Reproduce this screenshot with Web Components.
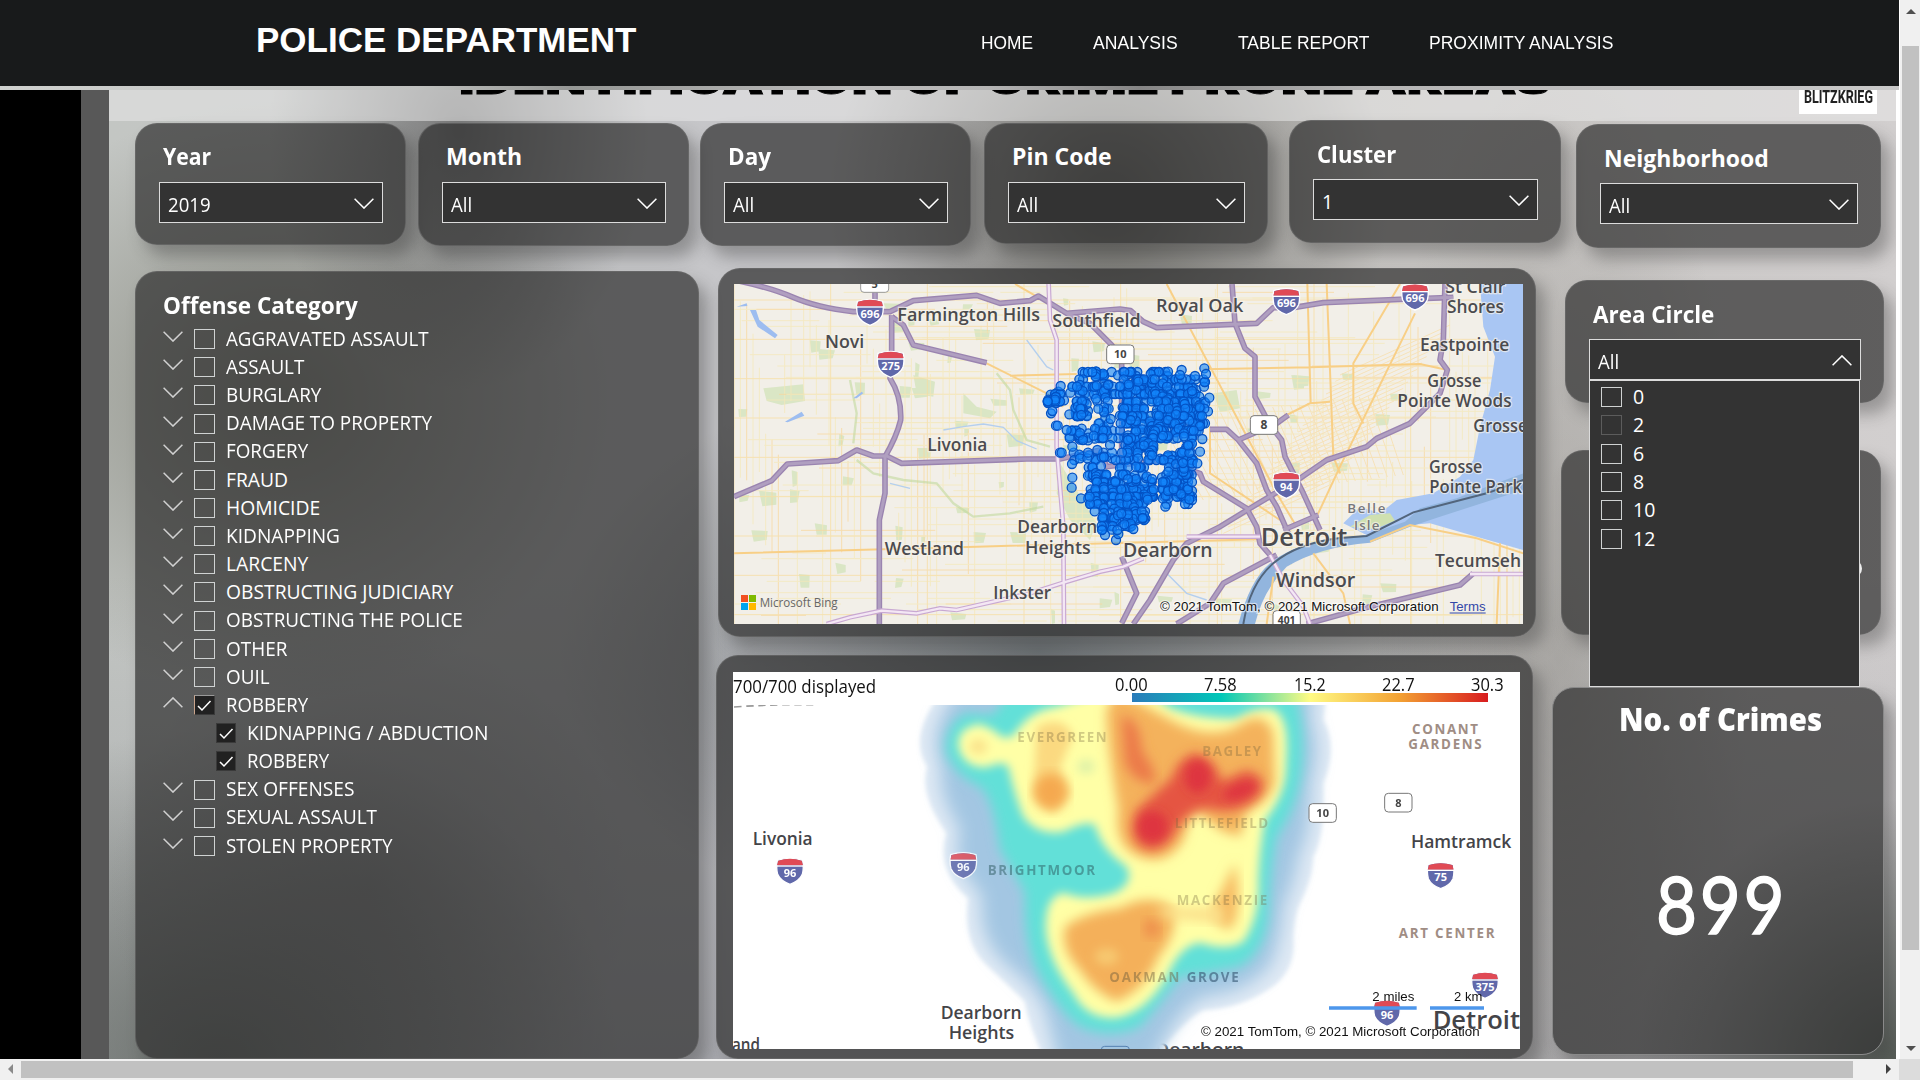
<!DOCTYPE html>
<html lang="en">
<head>
<meta charset="utf-8">
<title>Police Department</title>
<style>
html,body{margin:0;padding:0;width:1920px;height:1080px;overflow:hidden;background:#f0f0f0;font-family:"Open Sans","Noto Sans",sans-serif}
</style>
</head>
<body>
<app-window></app-window>
<script>
function define(name, html, setup) {
  customElements.define(name, class extends HTMLElement {
    connectedCallback() {
      if (this.shadowRoot) return;
      const t = document.createElement('template');
      t.innerHTML = typeof html === 'function' ? html(this) : html;
      this.attachShadow({ mode: 'open' }).appendChild(t.content.cloneNode(true));
      if (setup) setup(this, this.shadowRoot);
    }
  });
}

/* One line of text squeezed or stretched to a set width */
define('fit-text', `<style>
:host{display:inline-block;white-space:nowrap;flex:none}
span{display:inline-block;transform-origin:0 50%}
</style><span><slot></slot></span>`, (el, root) => {
  const w = +el.getAttribute('w');
  if (!w) return;
  const s = root.querySelector('span');
  const natural = s.offsetWidth;
  el.style.width = w + 'px';
  if (natural) s.style.transform = `scaleX(${w / natural})`;
});

define('chevron-icon', el => `<style>
:host{display:block;flex:none;width:20px;height:11px}
svg{display:block}
</style><svg width="20" height="11" viewBox="0 0 20 11" fill="none" stroke="${el.getAttribute('tone') || '#fff'}" stroke-width="1.5"><path d="${el.hasAttribute('up') ? 'M.6 10.2 10 .9l9.4 9.3' : 'M.6.8 10 10.1 19.4.8'}"/></svg>`);

define('check-box', el => `<style>
:host{display:block;flex:none;box-sizing:border-box;width:21px;height:20px;border:1.5px solid #cfd2d2}
:host([checked]){background:#212121;border:1px solid #3a3a3a;width:20px;height:20px}
:host([edge]){border-color:#999 #3a3a3a #3a3a3a #c9a48c;width:21px}
:host([dim]){border:1px solid #5c5c5c}
svg{display:block}
</style>${el.hasAttribute('checked') ? '<svg width="18" height="18" viewBox="0 0 18 18" fill="none" stroke="#fff" stroke-width="1.5"><path d="M3 10l4 4 8.5-9"/></svg>' : ''}`);

define('nav-bar', `<style>
:host{display:flex;height:86px;background:#181a1b;color:#fff;font-family:"Liberation Sans",sans-serif;align-items:center;box-sizing:border-box}
h1{margin:0 0 6px 256px;font-size:35px;line-height:40px;font-weight:700;width:381px}
nav{display:flex;gap:60px;margin-left:344px;font-size:18px;line-height:22px}
</style><h1><fit-text w="380">POLICE DEPARTMENT</fit-text></h1>
<nav><fit-text w="52">HOME</fit-text><fit-text w="85">ANALYSIS</fit-text><fit-text w="131">TABLE REPORT</fit-text><fit-text w="184">PROXIMITY ANALYSIS</fit-text></nav>`);

define('glass-card', `<style>
:host{display:block;box-sizing:border-box;flex:none;border-radius:22px;background:rgba(45,45,46,.7);border:1px solid rgba(115,115,115,.55);box-shadow:9px 11px 16px rgba(50,50,50,.36)}
</style><slot></slot>`);

define('select-box', el => `<style>
:host{display:block}
.b{box-sizing:border-box;display:flex;align-items:center;justify-content:space-between;height:41px;border:1.5px solid #dcdcdc;background:#333;color:#fff;padding:4px 8px 0 8px;font-size:19.5px;line-height:28px}
chevron-icon{margin-top:-2px}
</style><div class="b"><fit-text w="${el.getAttribute('w')}">${el.getAttribute('value')}</fit-text><chevron-icon ${el.hasAttribute('open') ? 'up' : ''}></chevron-icon></div>`);

define('filter-card', el => `<style>
:host{display:block;flex:none}
glass-card{height:100%;padding:17px 22px 0 23px}
h3{margin:var(--dy,0px) 0 calc(11px - var(--dy,0px)) 4px;height:30px;line-height:31px;font-size:23px;font-weight:700;color:#fff}
.s{position:relative}
</style><glass-card><h3><fit-text w="${el.getAttribute('lw')}">${el.getAttribute('label')}</fit-text></h3><div class="s"><select-box value="${el.getAttribute('value')}" w="${el.getAttribute('vw')}" ${el.hasAttribute('open') ? 'open' : ''}></select-box><slot></slot></div></glass-card>`);

define('option-list', `<style>
:host{position:absolute;z-index:5;left:0;top:40px;width:271px;height:308px;box-sizing:border-box;background:#333;border:1.5px solid #dcdcdc;border-top-width:2px;padding:2px 0 0 11px;color:#fff;font-size:19.5px;font-weight:500}
.o{display:flex;align-items:center;height:28.3px;gap:11px;line-height:28px}
</style>` + [['0', 11], ['2', 11], ['6', 11], ['8', 11], ['10', 22], ['12', 22]].map(o =>
  `<div class="o"><check-box ${o[0] === '2' ? 'dim' : ''}></check-box><fit-text w="${o[1]}">${o[0]}</fit-text></div>`).join(''));

define('tree-item', el => `<style>
:host{display:flex;align-items:center;height:28.17px;line-height:28px;color:#fff;font-size:19.3px}
chevron-icon,.sp{width:20px;margin:-5px 11px 0 0}
:host([child]) .sp{margin-right:33px}
check-box{margin-right:11px}
:host([child]) check-box{margin-right:11px}
fit-text{margin-top:-.5px}
</style>${el.hasAttribute('child') ? '<span class="sp"></span>' : `<chevron-icon tone="#d0d0d0" ${el.hasAttribute('checked') ? 'up' : ''}></chevron-icon>`}
<check-box ${el.hasAttribute('checked') ? 'checked' : ''} ${el.hasAttribute('checked') && !el.hasAttribute('child') ? 'edge' : ''}></check-box><fit-text w="${el.getAttribute('w')}"><slot></slot></fit-text>`);

const items = [['AGGRAVATED ASSAULT', 203], ['ASSAULT', 78], ['BURGLARY', 95], ['DAMAGE TO PROPERTY', 206], ['FORGERY', 82], ['FRAUD', 62], ['HOMICIDE', 94], ['KIDNAPPING', 114], ['LARCENY', 82], ['OBSTRUCTING JUDICIARY', 227], ['OBSTRUCTING THE POLICE', 237], ['OTHER', 61], ['OUIL', 44], ['ROBBERY', 82, 'checked'], ['KIDNAPPING / ABDUCTION', 241, 'checked child'], ['ROBBERY', 82, 'checked child'], ['SEX OFFENSES', 128], ['SEXUAL ASSAULT', 151], ['STOLEN PROPERTY', 167]];
define('offense-tree', `<style>
:host{display:block;flex:none;width:564px;height:788px;margin-top:3px}
glass-card{height:100%;padding:18px 0 0 27px}
h3{margin:0 0 5px;height:30px;line-height:31px;font-size:23px;color:#fff}
</style><glass-card><h3><fit-text w="195">Offense Category</fit-text></h3>` +
items.map(i => `<tree-item w="${i[1]}" ${i[2] || ''}>${i[0]}</tree-item>`).join('') + `</glass-card>`);

/* interstate shield centred on x,y in map units (3 per pixel) */
function shield(x, y, n, o) {
  return `<g transform="translate(${x} ${y})" opacity="${o || 1}"><path d="M-38-34Q0-46 38-34Q42-10 37 8Q28 28 0 38Q-28 28-37 8Q-42-10-38-34Z" fill="#6068aa" stroke="#fff" stroke-width="4"/><path d="M-35-33Q0-44 35-33L39-19H-39Z" fill="#e04a55"/><path d="M-40-17H40" stroke="#fff" stroke-width="4"/><text y="15" text-anchor="middle" font-size="33" font-weight="700" fill="#fff">${n}</text></g>`;
}
function route(x, y, n, fs) {
  return `<rect x="${x - 41}" y="${y - 28}" width="82" height="56" rx="11" fill="#fff" stroke="#777" stroke-width="3"/><text x="${x}" y="${y + 12}" text-anchor="middle" font-size="${fs || 33}" font-weight="700" fill="#444">${n}</text>`;
}
function lab(x, y, w, s, fs, extra) {
  return `<text x="${x}" y="${y}" textLength="${w}" lengthAdjust="spacingAndGlyphs" font-size="${fs}" ${extra || ''}>${s}</text>`;
}
/* district names keep their glyph widths and are letter-spaced */
function area(x, y, w, s) {
  return `<text x="${x}" y="${y}" textLength="${w}" lengthAdjust="spacing" font-size="40">${s}</text>`;
}
function rng(seed) { return () => ((seed = (seed * 1664525 + 1013904223) >>> 0) / 4294967296); }

function minorRoads() {
  const r = rng(11); let s = '';
  for (let x = 72; x < 2440; x += 19) {
    const y0 = 72 + r() * 700, len = 100 + r() * 600;
    s += `<path d="M${x} ${y0 | 0}v${len | 0}" stroke="${r() < .2 ? '#f8d79c' : '#f5e8b8'}"/>`;
  }
  for (let y = 80; y < 1092; y += 17) {
    for (let k = 0; k < 3; k++) {
      const x0 = 72 + r() * 1900, len = 100 + r() * 600;
      s += `<path d="M${x0 | 0} ${y}h${len | 0}" stroke="${r() < .2 ? '#f8d79c' : '#f5e8b8'}"/>`;
    }
  }
  for (let i = 0; i < 9; i++) {
    s += `<path d="M${72 + i * 290} 72V1092M72 ${120 + i * 118}H2440" stroke="#f7dd9f"/>`;
  }
  for (let i = 0; i < 26; i++) {
    s += `<path d="M${1480 + i * 24} ${720 - i * 3}l${-130 + i * 2} -240M${1540 + i * 14} ${820 - i * 19}l330 -150" stroke="#f8deaa"/>`;
  }
  return s;
}
function parks() {
  const r = rng(5); let s = '';
  for (let i = 0; i < 75; i++) {
    const x = 80 + r() * 2000, y = 80 + r() * 980, w = 12 + r() * 42, h = 10 + r() * 32;
    s += `<path d="M${x | 0} ${y | 0}l${w | 0} ${(r() * 8) | 0} ${-r() * 8 | 0} ${h | 0} ${-w * .8 | 0} ${(r() * 6) | 0}z"/>`;
  }
  return s;
}
function dots() {
  const r = rng(77), out = [];
  const regions = [[18, 125, 72, 160, 24], [105, 63, 390, 80, 42], [90, 95, 230, 135, 36], [106, 140, 142, 208, 28], [168, 140, 208, 255, 28], [235, 90, 322, 178, 60], [235, 178, 340, 300, 88], [330, 88, 500, 150, 78], [345, 150, 500, 240, 135], [330, 235, 462, 268, 42], [260, 268, 350, 302, 22], [88, 235, 190, 272, 24], [100, 314, 420, 326, 46], [145, 335, 160, 385, 8], [155, 368, 200, 395, 14], [150, 396, 345, 442, 88], [145, 442, 330, 478, 70], [180, 488, 320, 514, 42], [182, 520, 285, 546, 14], [365, 372, 462, 452, 74], [370, 335, 455, 370, 20], [425, 258, 462, 340, 25], [225, 350, 340, 395, 28]];
  for (const g of regions) for (let i = 0; i < g[4]; i++) {
    let x = g[0] + r() * (g[2] - g[0]), y = g[1] + r() * (g[3] - g[1]);
    if (r() < .5) y = Math.round(y / 22) * 22; else if (r() < .4) x = Math.round(x / 24) * 24;
    out.push([x, y]);
  }
  const single = [425, 60, 420, 75, 493, 55, 498, 72, 465, 78, 508, 143, 487, 267, 480, 305, 472, 340, 33, 190, 37, 183, 88, 193, 48, 227, 53, 227, 80, 240, 97, 290, 60, 308, 65, 308, 172, 300, 183, 348, 96, 342, 97, 383, 95, 413, 123, 445, 376, 470, 435, 462, 448, 448, 228, 570, 195, 555, 235, 552, 232, 540, 280, 537, 308, 504, 186, 540, 62, 108, 212, 207, 217, 265, 210, 285];
  for (let i = 0; i < single.length; i += 2) out.push([single[i], single[i + 1]]);
  return out.map(p => `<circle cx="${p[0].toFixed(0)}" cy="${p[1].toFixed(0)}" r="13.5"/>`).join('');
}

const hw = ['M72 60Q180 82 250 112T430 155H540L610 122L800 106L870 130L960 122L985 108L1070 160L1230 147L1262 152L1300 185L1340 203L1640 190L1690 143L1750 143L1840 128L2070 118L2230 112',
  'M495 90V150M545 165V330L540 355Q575 410 572 480Q560 530 525 590V700L508 780V1092', 'M545 170L580 195L610 255L830 308',
  'M72 710L185 662L232 612L385 602L440 570L490 588H530L575 610L950 597H1050L1170 570L1190 620L1350 600L1470 640L1480 665L1610 745L1640 800L1650 850L1680 885',
  'M1070 160L1140 190L1205 255L1235 300V620', 'M1566 72L1575 190L1605 265L1635 290V410L1680 495L1715 540L1725 590L1780 700L1830 810',
  'M1500 508H1550L1585 540L1700 490L1735 465M1585 540L1640 610L1670 690L1700 740L1735 820',
  'M2205 72L2200 240L2190 300L2212 330L2190 400L2150 440L2100 490L2000 535L1970 560L1850 600L1770 655L1620 745L1530 800L1430 850L1390 900L1320 1020L1270 1092',
  'M1235 890L1280 1000L1235 1090M1720 810L1825 765M1700 885L1540 970L1500 1030L1400 1092M1790 1092L1960 1045L2250 975L2290 940'];
const hwPink = 'M1016 72L1020 180L1040 240V560L1060 800L1062 1092M350 1092L420 1072L515 1052L620 1060L690 1045L740 1050L960 1000L1060 968L1170 935L1240 920L1300 895M1430 830H1650M1680 885L1720 960L1780 1040L1800 1092M2280 942H2440';

define('crime-map', `<style>
:host{display:block;flex:none;margin-left:1px;width:818px;height:369px}
glass-card{height:100%;padding:15px}
svg{display:block;font-family:"Open Sans",sans-serif}
</style><glass-card><svg width="789" height="340" viewBox="72 72 2367 1020">
<rect x="72" y="72" width="2367" height="1020" fill="#f2efe8"/>
<g fill="#d3e3ba" opacity=".75">${parks()}<path d="M160 385l120-12 5 50-70 12-45-12zM610 345l65 20-5 45-50-8zM1510 400l70-10 10 55-60 12zM1050 610l50 80 60 100-20 50-60-60-40-80zM760 400l40 40 60 15-20 20-80-15z"/></g>
<g fill="none" stroke-width="3" opacity=".75">${minorRoads()}</g>
<g fill="none" stroke="#c2d99c" stroke-width="7" opacity=".6"><path d="M440 600l50 40 90 20 100 10 50 60 60 40 110-10 100-20M860 340l40 50 10 60 40 90 70 20M420 360l20 100-10 90"/></g>
<g fill="none" stroke="#b4cfee" stroke-width="4"><path d="M700 510l60-10 60 -8 60 10 40 40 60 25M540 670l60 15M950 240l60 80 20 10M1370 940l60 60 60 20"/></g>
<path d="M120 150l18 0 10 30 55 45-8 10-52-35zM80 140l30-10 2 8zM225 485l50-30 8 12-50 20zM400 380l15-8M430 415l25-20 5 5-20 15z" fill="#9dbdf0"/>
<path d="M2310 72L2320 200L2355 290L2340 390L2310 500L2290 600L2250 650L2170 700L2060 720L2010 760L1950 740L1900 790L1980 830L2100 795L2160 790L2300 830L2440 870V72Z" fill="#a9c6f3"/>
<path d="M2440 640L2330 680L2240 715L2130 745L2085 785L1970 825L1850 840Q1740 860 1680 910T1585 1092H1635Q1660 990 1730 920Q1830 860 1980 848L2100 800L2190 770L2440 690Z" fill="#92b5de"/>
<path d="M1920 800l60-35 60-5 15 22-60 25z" fill="#cfe0b0"/>
<g fill="none" stroke="#f8cf86" stroke-width="6"><path d="M915 72L990 115M830 310L1010 400L1060 440M900 347L1100 342M1370 72L1700 700L1760 800M1480 328L1800 322L2130 312L2212 330M1792 72L1802 430M1850 72L1870 590L1890 640M2070 72L1930 310V430L1960 490M2115 160L1890 620L1820 770M1500 500V640L1710 780M1730 465L1800 430L1860 425M72 880L800 860L1650 838M1980 845L2100 795L2300 835L2440 880M2370 850L2360 1092M1810 880L1900 1000L1920 1092M1690 950L1670 1092"/></g>
<g fill="none" stroke="#9a84b0" stroke-width="17" stroke-linejoin="round">${hw.map(d => `<path d="${d}"/>`).join('')}</g>
<g fill="none" stroke="#b09fc0" stroke-width="9" stroke-linejoin="round">${hw.map(d => `<path d="${d}"/>`).join('')}</g>
<path d="${hwPink}" fill="none" stroke="#c8a8d2" stroke-width="14"/><path d="${hwPink}" fill="none" stroke="#f4e7f4" stroke-width="7"/>
<path d="M2440 660L2330 700L2110 757L1970 828L1890 834Q1760 850 1690 910T1600 1092" fill="none" stroke="#52657c" stroke-width="6"/>
${shield(480, 158, 696)}${shield(542, 314, 275)}${shield(1729, 126, 696)}${shield(2115, 112, 696)}${shield(1729, 677, 94)}
<rect x="452" y="42" width="84" height="55" rx="10" fill="#fff" stroke="#999" stroke-width="3"/><text x="494" y="83" text-anchor="middle" font-size="33" font-weight="700" fill="#444">5</text>
${route(1231, 283, 10)}${route(1662, 495, 8, 36)}${route(1730, 1080, 401, 31)}
<g fill="#4b4b4f" stroke="#f7f4ec" stroke-width="7" stroke-opacity=".7" paint-order="stroke" font-weight="600">
${lab(345, 264, 118, 'Novi', 53)}${lab(562, 184, 428, 'Farmington Hills', 53)}${lab(1027, 202, 265, 'Southfield', 53)}${lab(1338, 156, 262, 'Royal Oak', 53)}
${lab(652, 573, 180, 'Livonia', 53)}${lab(524, 884, 238, 'Westland', 53)}${lab(922, 819, 240, 'Dearborn', 53)}${lab(945, 881, 197, 'Heights', 53)}${lab(850, 1018, 173, 'Inkster', 53)}
${lab(2206, 98, 180, 'St Clair', 53)}${lab(2211, 160, 171, 'Shores', 53)}${lab(2130, 273, 268, 'Eastpointe', 53)}${lab(2152, 380, 162, 'Grosse', 53)}${lab(2062, 441, 343, 'Pointe Woods', 53)}${lab(2290, 517, 162, 'Grosse', 53)}${lab(2157, 638, 160, 'Grosse', 53)}${lab(2158, 699, 278, 'Pointe Park', 53)}
${lab(1239, 892, 269, 'Dearborn', 57)}${lab(1652, 857, 260, 'Detroit', 74)}${lab(1698, 981, 238, 'Windsor', 60)}${lab(2175, 920, 258, 'Tecumseh', 53)}
<g fill="#77777b"><text x="1912" y="760" textLength="114" font-size="40">Belle</text><text x="1932" y="809" textLength="76" font-size="40">Isle</text></g></g>
<g transform="translate(990 270)" fill="#1286fb" fill-opacity=".6" stroke="#0452c4" stroke-width="3.8">${dots()}</g>
<path d="M93 1005h21v21H93z" fill="#f25022"/><path d="M117 1005h21v21h-21z" fill="#7fba00"/><path d="M93 1029h21v21H93z" fill="#00a4ef"/><path d="M117 1029h21v21h-21z" fill="#ffb900"/>
${lab(149, 1040, 234, 'Microsoft Bing', 37, 'fill="#666"')}
<g font-family="Liberation Sans,sans-serif">${lab(1350, 1053, 836, '© 2021 TomTom, © 2021 Microsoft Corporation', 40, 'fill="#111" stroke="#fff" stroke-opacity=".6" stroke-width="7" paint-order="stroke"')}${lab(2219, 1053, 108, 'Terms', 40, 'fill="#3347a8"')}</g><path d="M2219 1059h108" stroke="#3347a8" stroke-width="3"/>
</svg></glass-card>`);

define('heat-map', `<style>
:host{display:block;flex:none;margin:18px 0 0 -1px;width:817px;height:404px}
glass-card{height:100%;padding:16px 12px 9px 16px}
.bar{display:flex;height:33px;width:787px;background:#fff;color:#111;font-size:18.5px;justify-content:space-between}
.n{margin:1px 0 0 0;line-height:26px}
.scale{width:374px;margin-right:16px}
.t{display:flex;justify-content:space-between;line-height:25px;height:21px;font-size:17.5px;margin-left:-15px}
.g{height:9px;width:356px;margin-left:2px;background:linear-gradient(90deg,#2b7bba,#00c8b8 25%,#fffb84 50%,#f3a233 75%,#d81c1f)}
svg{display:block;font-family:"Open Sans",sans-serif}
</style><glass-card><div class="bar"><fit-text class="n" w="143">700/700 displayed</fit-text><div class="scale"><div class="t"><fit-text w="33">0.00</fit-text><fit-text w="33">7.58</fit-text><fit-text w="32">15.2</fit-text><fit-text w="33">22.7</fit-text><fit-text w="33">30.3</fit-text></div><div class="g"></div></div></div>
<svg width="787" height="344" viewBox="69 165 2361 1032">
<defs><filter id="b1" x="-20%" y="-20%" width="140%" height="140%"><feGaussianBlur stdDeviation="17"/></filter>
<filter id="b2" x="-20%" y="-20%" width="140%" height="140%"><feGaussianBlur stdDeviation="26"/></filter>
<filter id="b3" x="-50%" y="-50%" width="200%" height="200%"><feGaussianBlur stdDeviation="14"/></filter>
<filter id="b4" x="-10%" y="-10%" width="120%" height="120%"><feGaussianBlur stdDeviation="7"/></filter></defs>
<rect x="69" y="165" width="2361" height="1032" fill="#fff"/>
<path d="M72 171Q200 162 310 164" fill="none" stroke="#999" stroke-width="5" stroke-dasharray="22 14"/>
<g fill="#444448" font-weight="600">${lab(128, 586, 180, 'Livonia', 53)}${lab(692, 1106, 243, 'Dearborn', 53)}${lab(716, 1168, 197, 'Heights', 53)}${lab(66, 1204, 84, 'and', 53)}${lab(1335, 1218, 268, 'Dearborn', 53)}${lab(2103, 595, 301, 'Hamtramck', 53)}${lab(2168, 1136, 262, 'Detroit', 74)}</g>
<g fill="#a08d84" font-weight="700">${area(2106, 252, 198, 'CONANT')}${area(2095, 297, 220, 'GARDENS')}${area(2066, 863, 288, 'ART CENTER')}</g>
<g>
<path d="M700 120Q590 260 652 350Q625 430 710 550Q675 660 775 745Q755 880 835 950Q905 1015 945 1055Q955 1130 1010 1240H1320Q1425 1105 1480 1080Q1600 1075 1695 1005Q1760 950 1750 860Q1755 790 1770 760Q1810 680 1810 620Q1845 560 1840 400Q1885 290 1840 210L1850 120Z" fill="#dfe9f4" filter="url(#b4)"/>
<path d="M760 100Q640 240 695 350Q680 430 750 540Q715 640 815 735Q800 870 895 950Q975 1010 1005 1080L1050 1260H1320Q1395 1080 1485 1040Q1615 1030 1685 940Q1718 850 1720 770Q1760 680 1767 610Q1802 560 1802 400Q1837 290 1802 210L1812 100Z" fill="#a3c6e2" filter="url(#b2)"/>
<path d="M900 120L850 195L765 190Q700 230 708 310Q740 380 810 410Q850 440 870 600Q920 680 945 730Q940 880 985 970Q1050 1090 1110 1130Q1200 1170 1290 1130Q1350 1060 1410 980Q1500 970 1590 950Q1660 910 1675 800Q1680 660 1700 560Q1770 460 1778 330Q1785 220 1755 120Z" fill="#62e0d8" filter="url(#b1)"/>
<path d="M810 222Q740 232 745 290Q762 355 830 352Q880 330 895 350Q915 440 940 500Q985 558 1060 545Q1130 510 1155 525Q1175 600 1250 650Q1275 700 1210 730Q1130 755 1060 728Q1000 740 1008 850Q1020 940 1090 1030Q1130 1110 1220 1103Q1310 1085 1370 980Q1410 885 1470 878Q1550 905 1600 875Q1650 800 1645 690Q1650 580 1665 510Q1730 430 1728 340Q1740 200 1690 178Q1640 170 1580 205Q1480 210 1380 175L1320 130H1160L1040 170Q960 180 915 250Q890 280 850 240Z" fill="#ffffa6" filter="url(#b3)"/>
<ellipse cx="805" cy="290" rx="28" ry="24" fill="#fbe48d" filter="url(#b3)"/>
<path d="M980 230Q1060 190 1090 260Q1060 320 1050 360L1080 430L1030 490L970 440Z" fill="#fbd980" filter="url(#b3)"/>
<ellipse cx="1022" cy="425" rx="50" ry="55" fill="#f5a94f" filter="url(#b1)"/>
<ellipse cx="1128" cy="350" rx="26" ry="22" fill="#dff2a8" filter="url(#b3)"/>
<path d="M1220 120L1300 165L1400 220Q1500 270 1580 230Q1660 170 1690 250L1695 400Q1670 460 1610 485L1590 560L1530 540L1460 480Q1430 520 1420 570Q1370 650 1290 620Q1210 590 1225 480Q1190 280 1190 180Z" fill="#f4b25c" filter="url(#b1)"/>
<path d="M1065 830Q1130 785 1230 775Q1320 725 1390 775Q1405 850 1345 920Q1310 1015 1220 1055Q1150 1025 1110 960Q1050 900 1065 830Z" fill="#f4b05a" filter="url(#b1)"/>
<ellipse cx="1190" cy="920" rx="36" ry="26" fill="#f7c870" filter="url(#b3)"/><ellipse cx="1325" cy="835" rx="24" ry="28" fill="#ee8d4b" filter="url(#b1)"/>
<path d="M1575 640Q1600 780 1565 835Q1520 840 1505 780Z" fill="#f7bc64" filter="url(#b1)"/>
<path d="M1350 770Q1450 780 1540 770V820L1350 800Z" fill="#fbdf8a" filter="url(#b1)"/>
<path d="M1235 200Q1290 200 1295 300Q1350 380 1330 400Q1270 400 1245 340Z" fill="#ec7a4a" filter="url(#b1)"/>
<path d="M1455 310Q1515 325 1535 395L1610 360Q1690 390 1640 445Q1580 500 1490 475Q1430 480 1400 540Q1360 615 1300 595Q1245 560 1280 480Q1330 435 1385 385Q1405 325 1455 310Z" fill="#e55542" filter="url(#b1)"/>
<g fill="#de3540" filter="url(#b3)"><ellipse cx="1463" cy="380" rx="38" ry="48"/><ellipse cx="1328" cy="530" rx="44" ry="46"/><ellipse cx="1590" cy="422" rx="50" ry="22" transform="rotate(-22 1590 422)"/></g>
</g>
<g font-weight="700" fill="#71603a" fill-opacity=".32">${area(922, 276, 268, 'EVERGREEN')}${area(1477, 319, 176, 'BAGLEY')}${area(1394, 533, 280, 'LITTLEFIELD')}${area(1400, 765, 272, 'MACKENZIE')}
<g fill="#2b5a60" fill-opacity=".5">${area(833, 676, 322, 'BRIGHTMOOR')}</g>
<g fill="#6a5c3c" fill-opacity=".45">${area(1198, 996, 210, 'OAKMAN')}</g><g fill="#3c5c78" fill-opacity=".65">${area(1430, 996, 156, 'GROVE')}</g></g>
${shield(240, 665, 96)}${shield(760, 648, 96, .85)}${shield(2192, 678, 75)}${shield(2325, 1007, 375)}${shield(2031, 1091, 96)}
<g fill="none">${route(1838, 489, 10)}${route(2065, 458, 8)}<rect x="1174" y="1189" width="84" height="40" rx="10" stroke="#5580b0" stroke-width="3"/></g>
<path d="M1857 1074h263M2160 1074h162" stroke="#4d97ec" stroke-width="11"/>
<g font-family="Liberation Sans,sans-serif" fill="#111">${lab(1987, 1053, 126, '2 miles', 40)}${lab(2232, 1053, 85, '2 km', 40)}${lab(1473, 1158, 836, '© 2021 TomTom, © 2021 Microsoft Corporation', 40)}</g>
</svg></glass-card>`);

define('kpi-card', `<style>
:host{display:block;flex:none;width:332px;height:368px}
glass-card{height:100%;display:flex;flex-direction:column;align-items:center;color:#fff;border-color:#898989}
h2{margin:13px 0 0 4px;font-size:31px;line-height:36px;font-weight:800}
.v{margin:121px 0 0 6px;font:400 80px/90px Lato,sans-serif;letter-spacing:3px;-webkit-text-stroke:1.5px #fff}
</style><glass-card><h2><fit-text w="203">No. of Crimes</fit-text></h2><div class="v"><fit-text w="131">899</fit-text></div></glass-card>`);

define('dial-card', `<style>
:host{display:block;flex:none;width:320px;height:185px}
glass-card{height:100%;display:flex;align-items:center;justify-content:flex-end;padding:52px 18.5px 0 0}
i{display:block;width:16px;height:17px;border-radius:50%;background:#eee}
</style><glass-card><i></i></glass-card>`);

define('report-page', `<style>
:host{display:flex;flex-direction:column;width:1787px;height:969px;overflow:hidden;
background:
radial-gradient(ellipse 190px 260px at 350px 40px,rgba(88,88,88,.7),transparent),
radial-gradient(ellipse 280px 280px at 1000px 110px,rgba(72,72,66,.75),transparent),
radial-gradient(ellipse 330px 300px at 170px 310px,rgba(105,106,92,.62),transparent),
radial-gradient(ellipse 260px 260px at 260px 800px,rgba(105,105,105,.4),transparent),
radial-gradient(ellipse 400px 330px at 110px 969px,rgba(82,88,82,.7),transparent),
radial-gradient(ellipse 480px 300px at 930px 560px,rgba(78,86,90,.72),transparent),
radial-gradient(ellipse 190px 600px at 1450px 560px,rgba(120,118,112,.4),transparent),
radial-gradient(ellipse 260px 260px at 1787px 969px,rgba(66,74,66,.8),transparent),
linear-gradient(180deg,transparent 50%,rgba(120,122,132,.35)),
linear-gradient(90deg,#c3c6c3,#c6c6c9 35%,#c8c6c3 70%,#d2cfcf)}
.top{display:flex;flex:none;height:31px;background:rgba(232,232,232,.55);overflow:hidden;align-items:flex-start}
h2{margin:-42px 0 0 350px;font:900 40px/64px Inter,sans-serif;color:#000;width:1091px;-webkit-text-stroke:.8px #000}
.logo{margin:0 0 0 249px;width:78px;height:24px;background:#fff;color:#222;font:700 18px/13px Roboto,sans-serif;display:flex;justify-content:center;align-items:flex-start}
.filters{display:flex;flex:none;height:147px;align-items:flex-start;padding-left:26px}
.main{display:flex;flex:none;height:791px;padding-left:26px}
.c2{margin-left:18px;width:819px}
.c3{margin-left:16px;width:332px}
</style>
<div class="top"><h2><fit-text w="1091">IDENTIFICATION OF CRIME PRONE AREAS</fit-text></h2><div class="logo"><fit-text w="69">BLITZKRIEG</fit-text></div></div>
<div class="filters">
<filter-card style="width:271px;height:122px;margin-top:2px" label="Year" lw="48" value="2019" vw="43"></filter-card>
<filter-card style="width:271px;height:123px;margin:2px 0 0 12px" label="Month" lw="76" value="All" vw="21"></filter-card>
<filter-card style="width:271px;height:123px;margin:2px 0 0 11px" label="Day" lw="43" value="All" vw="21"></filter-card>
<filter-card style="width:284px;height:121px;margin:2px 0 0 13px" label="Pin Code" lw="100" value="All" vw="21"></filter-card>
<filter-card style="width:272px;height:123px;margin:-1px 0 0 21px;--dy:1px" label="Cluster" lw="79" value="1" vw="11"></filter-card>
<filter-card style="width:305px;height:124px;margin:3px 0 0 15px;--dy:1px" label="Neighborhood" lw="165" value="All" vw="21"></filter-card>
</div>
<div class="main"><offense-tree></offense-tree>
<div class="c2"><crime-map></crime-map><heat-map></heat-map></div>
<div class="c3"><filter-card open style="width:319px;height:123px;margin:12px 0 0 13px;position:relative;z-index:3;--dy:1px" label="Area Circle" lw="121" value="All" vw="21"><option-list></option-list></filter-card>
<dial-card style="margin:47px 0 0 9px"></dial-card><kpi-card style="margin-top:52px"></kpi-card></div></div>`);

define('scroll-bars', el => el.hasAttribute('v') ? `<style>
:host{display:flex;flex-direction:column;align-items:center;width:20px;height:1059px;background:#f0f0f0;box-sizing:border-box;border-left:1px solid #fff}
.t{width:17px;height:904px;background:#c1c1c1}
svg{display:block}
</style><svg width="17" height="46"><path d="M4 14h10l-5-5z" fill="#505050"/></svg><div class="t"></div><svg width="17" height="109"><path d="M4 96h10l-5 5z" fill="#505050"/></svg>` : `<style>
:host{display:flex;align-items:center;width:1920px;height:21px;background:#f0f0f0}
.t{width:1832px;height:17px;background:#c1c1c1}
.k{width:21px;height:21px;background:#dcdcdc}
svg{display:block}
</style><svg width="21" height="21"><path d="M13 5v10l-5-5z" fill="#8a8a8a"/></svg><div class="t"></div><svg width="46" height="21"><path d="M33 5v10l5-5z" fill="#404040"/></svg><div class="k"></div>`);

define('app-window', `<style>
:host{display:block;width:1920px;height:1080px}
.row{display:flex}
.view{width:1899px;height:1059px;background:#fff}
.line{height:4px;background:linear-gradient(90deg,#cfd1cf,#bfc1bf 22%,#959795 30%,#bbb 45%,#b5b5b5 52%,#858585 60%,#b5b5b5 72%,#c9c9c9)}
.black{width:81px;background:#000}.grey{width:28px;background:#585858}
</style><div class="row"><div class="view"><nav-bar></nav-bar><div class="line"></div><div class="row"><div class="black"></div><div class="grey"></div><report-page></report-page></div></div><scroll-bars v style="width:21px"></scroll-bars></div><scroll-bars></scroll-bars>`);
</script>
</body>
</html>
